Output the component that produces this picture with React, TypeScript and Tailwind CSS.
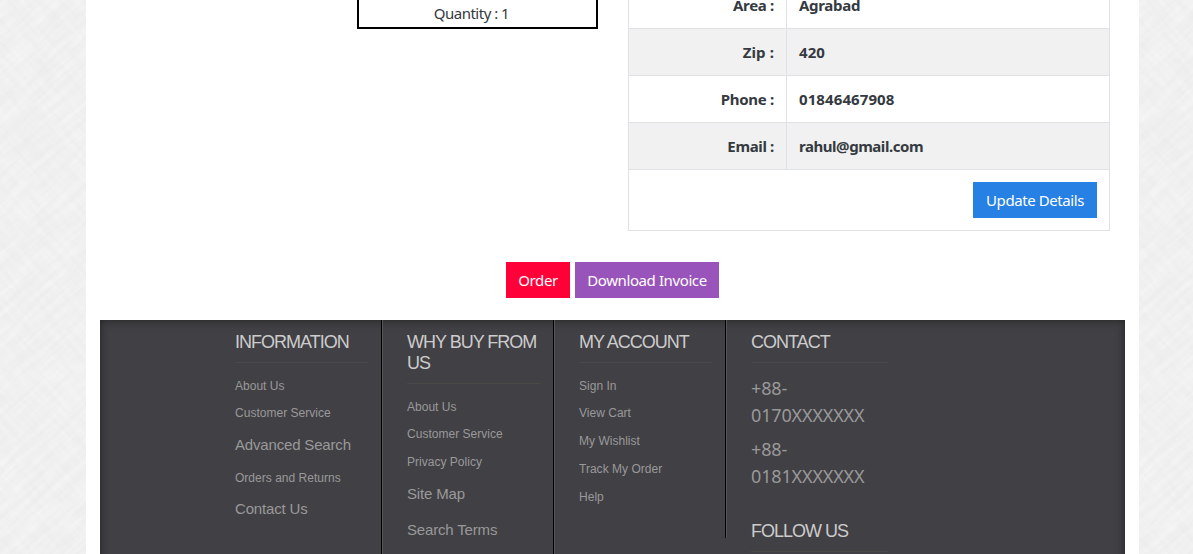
type Link = { text: string; row: string };

const small = "text-[12px] tracking-[0.02px]";
const large = "text-[15px] tracking-[-0.17px]";

const details = [
  { label: "Area :", value: "Agrabad", row: "h-7 items-end", labelFit: "tracking-[-0.3px]", fit: "tracking-[-0.3px]" },
  { label: "Zip :", value: "420", row: "h-[46px] bg-[#f1f1f1]", labelFit: "tracking-[0.1px]", fit: "tracking-[0.1px]" },
  { label: "Phone :", value: "01846467908", row: "h-[46px]", labelFit: "tracking-[-0.3px]", fit: "tracking-[0.1px]" },
  { label: "Email :", value: "rahul@gmail.com", row: "h-[46px] bg-[#f1f1f1]", labelFit: "tracking-[-0.35px]", fit: "tracking-[-0.45px]" },
];

const information: Link[] = [
  { text: "About Us", row: `h-[27px] ${small}` },
  { text: "Customer Service", row: `h-[27px] ${small}` },
  { text: "Advanced Search", row: `h-[38px] ${large}` },
  { text: "Orders and Returns", row: `h-[28px] ${small}` },
  { text: "Contact Us", row: `h-[34px] ${large}` },
];

const whyBuy: Link[] = [
  { text: "About Us", row: `h-[27px] ${small}` },
  { text: "Customer Service", row: `h-[28px] ${small}` },
  { text: "Privacy Policy", row: `h-[28px] ${small}` },
  { text: "Site Map", row: `h-[36px] ${large}` },
  { text: "Search Terms", row: `h-[36px] ${large}` },
];

const account: Link[] = [
  { text: "Sign In", row: `h-[27px] ${small}` },
  { text: "View Cart", row: `h-[27px] ${small}` },
  { text: "My Wishlist", row: `h-[29px] ${small}` },
  { text: "Track My Order", row: `h-[27px] ${small}` },
  { text: "Help", row: `h-[29px] ${small}` },
];

function Heading({ children }: { children: string }) {
  return (
    <h4 className="border-b border-[#494948] pb-[9px] text-[18px] leading-[21px] tracking-[-1px] text-[#ccc]">
      {children}
    </h4>
  );
}

function Column({ title, links, className }: { title: string; links: Link[]; className: string }) {
  return (
    <div className={`flex w-[172px] shrink-0 border-r border-[#555] ${className}`}>
      <div className="w-full border-r border-black pt-3 pr-3 pl-6">
        <Heading>{title}</Heading>
        <ul className="mt-[9px] text-[#999]">
          {links.map((link) => (
            <li key={link.text} className={`flex items-center whitespace-nowrap ${link.row}`}>
              <a>{link.text}</a>
            </li>
          ))}
        </ul>
      </div>
    </div>
  );
}

/* Brushed paper grain for the page margins. */
function Texture({ id, className }: { id: string; className: string }) {
  return (
    <svg className={`h-[554px] shrink-0 bg-[#efefef] ${className}`} aria-hidden="true">
      <filter id={`${id}-a`} x="0" y="0" width="100%" height="100%">
        <feTurbulence type="fractalNoise" baseFrequency="0.02 0.2" numOctaves="3" seed="4" />
        <feColorMatrix values="0 0 0 0 1  0 0 0 0 1  0 0 0 0 1  0.7 0 0 0 -0.2" />
      </filter>
      <filter id={`${id}-b`} x="0" y="0" width="100%" height="100%">
        <feTurbulence type="fractalNoise" baseFrequency="0.2 0.02" numOctaves="3" seed="9" />
        <feColorMatrix values="0 0 0 0 0.7  0 0 0 0 0.7  0 0 0 0 0.7  0.3 0 0 0 -0.1" />
      </filter>
      <g transform="rotate(-42 43 277)">
        <rect x="-400" y="-200" width="900" height="950" filter={`url(#${id}-a)`} />
        <rect x="-400" y="-200" width="900" height="950" filter={`url(#${id}-b)`} />
      </g>
    </svg>
  );
}

export default function App() {
  return (
    <div className="flex h-[554px] w-[1193px] overflow-hidden bg-[#efefef] font-['Noto_Sans','Open_Sans',sans-serif] text-[15px] text-[#343a40]">
      <Texture id="left" className="w-[86px]" />
      <main className="flex h-full w-[1053px] shrink-0 flex-col bg-white px-[14px]">
        <div className="flex h-[262px] shrink-0 items-start">
          <div className="ml-[257px] flex h-[29px] w-[241px] shrink-0 items-start justify-center border-x-2 border-b-2 border-black pr-3">
            <span className="mt-[2px] leading-[22px] tracking-[-0.5px]">Quantity : 1</span>
          </div>
          <div className="ml-[30px] w-[482px] shrink-0 border-x border-b border-[#dee2e6] font-bold leading-[22px]">
            {details.map((d) => (
              <div key={d.label} className="border-b border-[#dee2e6]">
                <div className={`flex ${d.row}`}>
                  <div className="flex h-full w-[158px] shrink-0 items-end justify-end border-r border-[#dee2e6] pr-3 pb-3">
                    <span className={d.labelFit}>{d.label}</span>
                  </div>
                  <div className="flex h-full items-end pb-3 pl-3">
                    <span className={d.fit}>{d.value}</span>
                  </div>
                </div>
              </div>
            ))}
            <div className="flex h-[60px] items-start justify-end p-3 font-normal">
              <button className="h-9 w-[124px] whitespace-nowrap bg-[#2780e3] tracking-[-0.42px] text-white">Update Details</button>
            </div>
          </div>
        </div>
        <div className="flex h-[58px] shrink-0 items-start gap-[5px] pl-[406px] text-white">
          <button className="h-9 w-16 bg-[#ff0039] tracking-[-0.4px]">Order</button>
          <button className="h-9 w-36 whitespace-nowrap bg-[#9954bb] tracking-[-0.4px]">Download Invoice</button>
        </div>
        <footer className="flex h-[300px] shrink-0 items-start bg-[#414045] pl-[111px] font-['Liberation_Sans',Arial,sans-serif] shadow-[inset_0_0_10px_#222]">
          <Column title="INFORMATION" links={information} className="h-[260px]" />
          <Column title="WHY BUY FROM US" links={whyBuy} className="h-[260px]" />
          <Column title="MY ACCOUNT" links={account} className="h-[218px]" />
          <div className="w-[161px] pt-3 pl-6">
            <Heading>CONTACT</Heading>
            <div className="mt-3 flex flex-col gap-[7px] font-['Noto_Sans','Open_Sans',sans-serif] text-[18px] leading-[27px] tracking-[-0.15px] text-[#999]">
              <p>+88-<br />0170XXXXXXX</p>
              <p>+88-<br />0181XXXXXXX</p>
            </div>
            <div className="mt-[31px]">
              <Heading>FOLLOW US</Heading>
            </div>
          </div>
        </footer>
      </main>
      <Texture id="right" className="w-[54px]" />
    </div>
  );
}
